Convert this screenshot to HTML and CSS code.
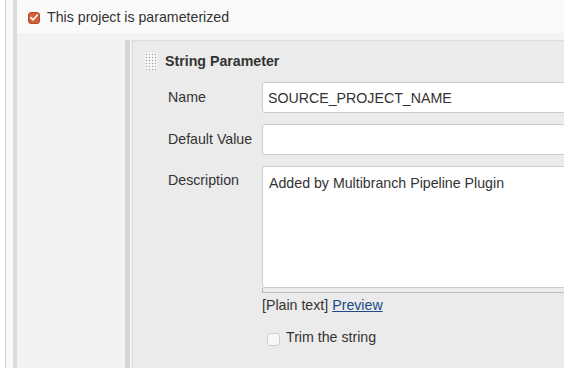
FILE: index.html
```html
<!DOCTYPE html>
<html lang="en">
<head>
  <meta charset="UTF-8" />
  <title>Job configuration</title>
  <link rel="stylesheet" href="styles.css">
</head>
<body>
  <div class="page">
    <div class="section">
      <div class="section-head">
        <label class="toggle">
          <span class="check-on">
            <svg width="13" height="13" viewBox="0 0 13 13">
              <path d="M3 6.6 L5.4 9 L10 4" fill="none" stroke="#fff" stroke-width="1.8" stroke-linecap="round" stroke-linejoin="round"/>
            </svg>
          </span>
          This project is parameterized
        </label>
      </div>

      <div class="section-body">
        <div class="param">
          <div class="param-box">
            <div class="param-title">
              <span class="handle"></span>
              <span>String Parameter</span>
            </div>

            <div class="field">
              <div class="field-label">Name</div>
              <div class="field-control">
                <input type="text" class="text-input" value="SOURCE_PROJECT_NAME">
              </div>
            </div>

            <div class="field">
              <div class="field-label">Default Value</div>
              <div class="field-control">
                <input type="text" class="text-input" value="">
              </div>
            </div>

            <div class="field field-desc">
              <div class="field-label">Description</div>
              <div class="field-control">
                <textarea class="text-area">Added by Multibranch Pipeline Plugin</textarea>
                <div class="grip"></div>
                <div class="help-line">[Plain text] <a href="#">Preview</a></div>
                <label class="trim">
                  <input type="checkbox" class="check-off">
                  Trim the string
                </label>
              </div>
            </div>
          </div>
        </div>
      </div>
    </div>
  </div>
</body>
</html>
```

FILE: styles.css
```css
html, body {
  overflow: hidden;
}

body {
  margin: 0;
  background: #fff;
  font-family: "Liberation Sans", Arial, sans-serif;
  font-size: 14.2px;
  line-height: 17px;
  color: #333;
}

.page {
  margin-left: 5px;
  border-left: 1px solid #d2d2d2;
  padding-left: 7px;
  background: #f9f9f9;
  width: 760px;
  height: 368px;
}

.section {
  border-left: 4px solid #dddddd;
  background: #f2f2f2;
  height: 100%;
}

.section-head {
  height: 33px;
  box-sizing: border-box;
  padding: 2px 0 0 11px;
  background: #fafafa;
  display: flex;
  align-items: center;
}

.toggle {
  display: flex;
  align-items: center;
  gap: 7px;
}

.check-on {
  width: 12px;
  height: 12px;
  border-radius: 3px;
  background: #d4603a;
  border: 1px solid #b84a26;
  box-sizing: border-box;
  display: flex;
  align-items: center;
  justify-content: center;
}

.check-on svg {
  display: block;
  margin: -1px;
}

.section-body {
  padding: 7px 0 0 108px;
}

.param {
  border-left: 5px solid #d6d6d6;
  padding-left: 2px;
  background: #f0f0f0;
}

.param-box {
  border: 1px solid #dcdcdc;
  border-right: none;
  background: #ebebeb;
  padding: 12px 0 40px 12px;
}

.param-title {
  display: flex;
  align-items: center;
  gap: 8px;
  height: 17px;
  font-weight: bold;
  margin-bottom: 12px;
}

.handle {
  width: 12px;
  height: 17px;
  background-color: #fdfdfd;
  background-image: radial-gradient(circle, #a8a8a8 0.7px, transparent 1.1px);
  background-size: 3px 3px;
  background-position: 0 0;
}

.field {
  display: flex;
  padding-left: 23px;
  margin-bottom: 11px;
}

.field + .field-desc {
  margin-top: 1px;
}

.field-label {
  width: 94px;
  flex: none;
  padding-top: 7px;
}

.field-desc .field-label {
  padding-top: 6px;
}

.field-control {
  flex: 1;
}

.text-input,
.text-area {
  display: block;
  width: 100%;
  box-sizing: border-box;
  border: 1px solid #cccccc;
  border-radius: 3px;
  background: #fff;
  font-family: "Liberation Sans", Arial, sans-serif;
  font-size: 14.2px;
  line-height: 17px;
  color: #333;
  margin: 0;
}

.text-input {
  height: 31px;
  padding: 0 5px;
}

.text-area {
  height: 122px;
  padding: 8px 6px;
  resize: none;
}

.grip {
  height: 5px;
  border-left: 1px solid #bbbbbb;
  border-bottom: 1px solid #bbbbbb;
  box-sizing: border-box;
}

.help-line {
  margin-top: 4px;
}

.help-line a {
  color: #204a87;
  text-decoration: underline;
}

.trim {
  display: flex;
  align-items: center;
  gap: 6px;
  margin-top: 15px;
  padding-left: 5px;
}

.check-off {
  appearance: none;
  -webkit-appearance: none;
  width: 13px;
  height: 13px;
  margin: 4px 0 0 0;
  border: 1px solid #cfcfcf;
  border-radius: 3px;
  background: #f7f7f7;
  box-sizing: border-box;
}
```
